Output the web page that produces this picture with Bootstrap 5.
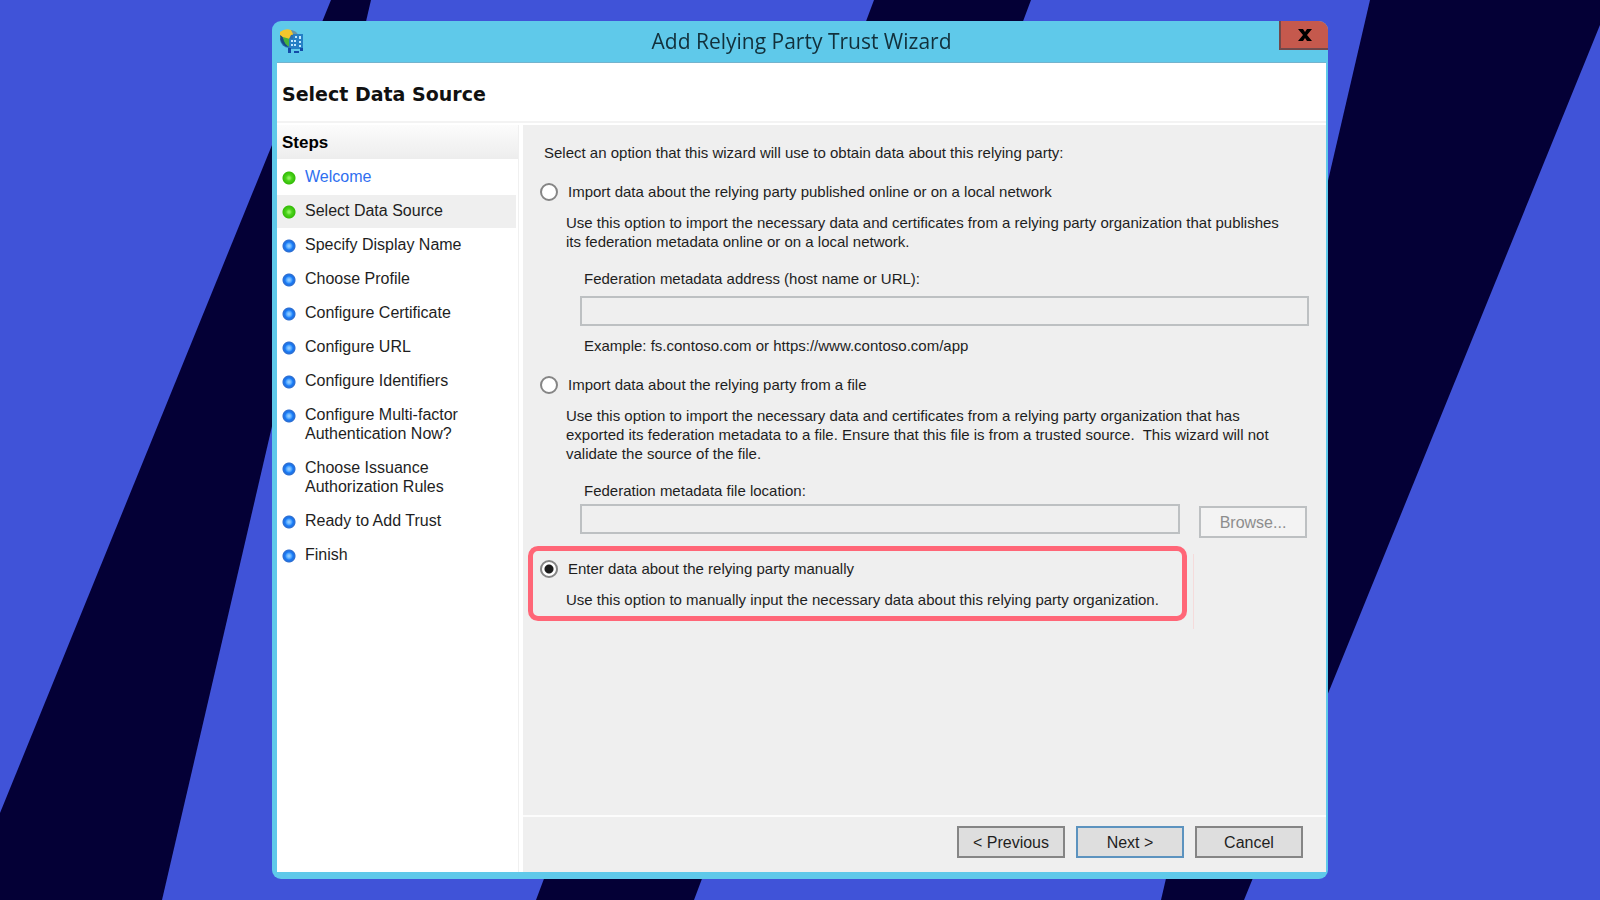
<!DOCTYPE html>
<html lang="en">
<head>
<meta charset="utf-8">
<meta name="viewport" content="width=device-width, initial-scale=1">
<title>Add Relying Party Trust Wizard</title>
<link href="https://cdn.jsdelivr.net/npm/bootstrap@5.3.0/dist/css/bootstrap.min.css" rel="stylesheet">
<style>
  body { background: #4053d8; color: #1e1e1e; font: 15px/19px "Liberation Sans", sans-serif; }
  .backdrop { z-index: -1; }
  .stage { padding: 21px 16px; }
  .wizard { max-width: 1056px; background: #5fc9ea; border-radius: 9px; padding: 0 2px 7px 5px; }
  .titlebar { height: 42px; padding-left: 2px; border-bottom: 1px solid #74b3cd; }
  .titlebar h1 { font: 21px/40px "Open Sans", sans-serif; color: #12303b; padding-left: 20px; }
  .close-btn { width: 49px; height: 29px; margin-right: -2px; background: #c5594d; border: 1px solid #70494b; border-width: 0 0 2px 2px; border-radius: 0; }
  .page-head { background: #fff; padding: 21px 5px 17px; border-bottom: 2px solid #f3f3f3; }
  .page-head h2 { font: bold 19px/20px "DejaVu Sans", sans-serif; color: #111; }
  .panes { background: #fff; padding-top: 2px; }
  .steps { width: 242px; border-right: 1px solid #f0f0f0; font-size: 16px; }
  .steps h3 { font: bold 17px/19px "Liberation Sans", sans-serif; color: #000; padding: 8px 5px 7px; background: linear-gradient(#fcfcfc, #ededed); }
  .steps ol { padding-top: 2px; }
  .steps li { padding: 6px 6px 8px 28px; margin: 0 2px 0 0; background: radial-gradient(circle at 12px 17px, #8cc8ff 0 1px, #3f9bff 3px, #1577f5 4px, #2f6fd0 6px, #ffffff00 7px); }
  .steps li + li { margin-top: 1px; }
  .steps .visited { background: radial-gradient(circle at 12px 17px, #8cf05c 0 1px, #4bd41c 3px, #35bd08 6px, #ffffff00 7px); }
  .steps .current { background-color: #efefef; }
  .steps a { color: #2f6ff0; text-decoration: none; }
  .options { background: #efefef; margin-left: 4px; min-width: 0; }
  .fields { padding: 18px 17px 40px 21px; }
  .opt { gap: 10px; margin: 20px 0 0 -4px; }
  .opt input { appearance: none; width: 18px; height: 18px; flex: none; border: 2px solid #858585; border-radius: 50%; background: #fff; margin: 0; }
  .opt input:checked { background: radial-gradient(circle, #1c1c1c 4px, #fff 5px); }
  .note { margin: 12px 0 0 22px; max-width: 740px; }
  .entry { margin: 18px 0 0 36px; }
  .entry label, .entry .example { padding-left: 4px; }
  .entry .example { padding-top: 10px; }
  .entry input.form-control { height: 30px; border: 2px solid #bdc0c2; border-radius: 0; background: #efefef; padding: 0 6px; }
  .browse-row { gap: 19px; padding: 4px 2px 0 0; }
  .push { border-radius: 0; height: 32px; width: 108px; padding: 0; border: 2px solid #858585; background: #dedede; color: #1e1e1e; font: inherit; font-size: 16px; }
  .push.default { border-color: #5c93bf; }
  .push:disabled { border-color: #bdc0c2; background: #f3f3f3; color: #8d8d8d; opacity: 1; margin-top: 2px; }
  .marked { border: 5px solid #ff6677; border-radius: 10px; width: 659px; max-width: 100%; margin: 8px 0 0 -16px; padding: 8px 0 7px 7px; }
  .marked .opt { margin: 0; }
  .marked .note { margin-left: 26px; }
  .seam { width: 1px; background: #f5dbdb; margin: 16px 0 -8px 6px; }
  .actions { border-top: 2px solid #fcfcfc; padding: 9px 23px 14px; gap: 11px; }
</style>
</head>
<body>
<svg class="backdrop position-fixed top-0 start-0 w-100 h-100" viewBox="0 0 1600 900" preserveAspectRatio="none" aria-hidden="true">
  <g fill="#040036"><path d="M331 0h40L162 900H0v-87z"/><path d="M874 0h157L694 900H536z"/><path d="M1370 0h230v25L1244 900h-83z"/></g>
</svg>
<div class="stage d-flex justify-content-center min-vh-100">
  <main class="wizard d-flex flex-column w-100 overflow-hidden">
    <header class="titlebar d-flex align-items-start">
      <svg class="mt-2" width="25" height="25" viewBox="0 0 25 25" aria-hidden="true">
        <circle cx="10" cy="10" r="9" fill="#2b6fae"/>
        <path d="M1 3q5-4 11-2l5 4-5 1-2 4-4 1-5-2z" fill="#f4c62d"/>
        <path d="M1 6q4 2 5 7l3 5Q1 16 1 6z" fill="#164b86"/>
        <path d="M4 8l7 2v8q-6-2-7-10z" fill="#47b23c"/>
        <path d="M12 1q6 1 7 5l-5-1z" fill="#6896a4"/>
        <path d="M10 10h4V5h10v15H10z" fill="#257fc5"/>
        <path d="M12 11h2v2h-2zm3 0h2v2h-2zm-3 4h2v2h-2zm3 0h2v2h-2zm1-8h2v2h-2zm4 0h2v3h-2zm0 5h2v2h-2zm0 4h2v2h-2z" fill="#bfe8ff"/>
        <path d="M9 19h3v5H9zm6 3h5v2h-5zm6-3h3v3h-3z" fill="#134ba8"/>
      </svg>
      <h1 class="m-0 flex-grow-1 text-center">Add Relying Party Trust Wizard</h1>
      <button class="close-btn btn p-0 d-flex align-items-center justify-content-center" type="button" aria-label="Close">
        <svg width="14" height="12" viewBox="0 0 14 12" aria-hidden="true"><path d="M0 0h5l2 3 2-3h5L9 6l5 6H9L7 9l-2 3H0l5-6z"/></svg>
      </button>
    </header>
    <div class="page-head"><h2 class="m-0">Select Data Source</h2></div>
    <div class="panes d-flex flex-grow-1">
      <nav class="steps flex-shrink-0" aria-label="Steps">
        <h3 class="m-0">Steps</h3>
        <ol class="list-unstyled m-0">
          <li class="visited"><a href="#">Welcome</a></li>
          <li class="visited current" aria-current="step">Select Data Source</li>
          <li>Specify Display Name</li>
          <li>Choose Profile</li>
          <li>Configure Certificate</li>
          <li>Configure URL</li>
          <li>Configure Identifiers</li>
          <li>Configure Multi-factor<br>Authentication Now?</li>
          <li>Choose Issuance<br>Authorization Rules</li>
          <li>Ready to Add Trust</li>
          <li>Finish</li>
        </ol>
      </nav>
      <form class="options d-flex flex-column flex-grow-1">
        <div class="fields flex-grow-1">
          <p class="mb-0">Select an option that this wizard will use to obtain data about this relying party:</p>
          <div class="opt d-flex align-items-center"><input type="radio" name="source" id="online"><label for="online">Import data about the relying party published online or on a local network</label></div>
          <p class="note">Use this option to import the necessary data and certificates from a relying party organization that publishes<br>its federation metadata online or on a local network.</p>
          <div class="entry">
            <label class="d-block" for="address">Federation metadata address (host name or URL):</label>
            <input class="form-control mt-2" id="address" type="text" disabled>
            <div class="example">Example: fs.contoso.com or https://www.contoso.com/app</div>
          </div>
          <div class="opt d-flex align-items-center"><input type="radio" name="source" id="file"><label for="file">Import data about the relying party from a file</label></div>
          <p class="note">Use this option to import the necessary data and certificates from a relying party organization that has<br>exported its federation metadata to a file. Ensure that this file is from a trusted source.&nbsp; This wizard will not<br>validate the source of the file.</p>
          <div class="entry">
            <label class="d-block" for="location">Federation metadata file location:</label>
            <div class="browse-row d-flex align-items-start">
              <input class="form-control" id="location" type="text" disabled>
              <button class="push btn flex-shrink-0" type="button" disabled>Browse...</button>
            </div>
          </div>
          <div class="d-flex">
            <div class="marked">
              <div class="opt d-flex align-items-center"><input type="radio" name="source" id="manual" checked><label for="manual">Enter data about the relying party manually</label></div>
              <p class="note">Use this option to manually input the necessary data about this relying party organization.</p>
            </div>
            <div class="seam"></div>
          </div>
        </div>
        <footer class="actions d-flex justify-content-end">
          <button class="push btn" type="button">&lt; Previous</button>
          <button class="push default btn" type="button">Next &gt;</button>
          <button class="push btn" type="button">Cancel</button>
        </footer>
      </form>
    </div>
  </main>
</div>
<script src="https://cdn.jsdelivr.net/npm/bootstrap@5.3.0/dist/js/bootstrap.bundle.min.js"></script>
</body>
</html>
